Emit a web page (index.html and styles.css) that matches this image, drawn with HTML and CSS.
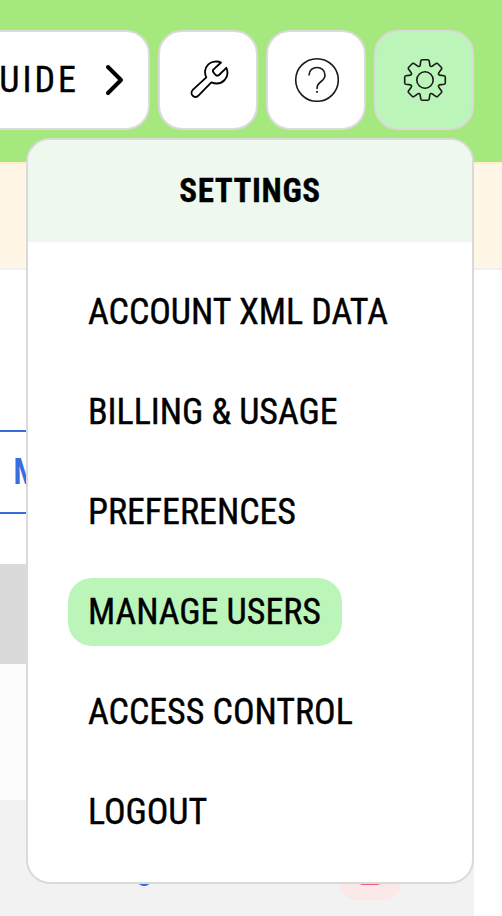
FILE: index.html
```html
<!DOCTYPE html>
<html lang="en">
<head>
<meta charset="utf-8">
<title>Settings</title>
<link rel="stylesheet" href="styles.css">
</head>
<body>
<header class="topbar">
  <button class="tool guide"><span class="guide-label">GUIDE</span>
    <svg class="chevron" width="20" height="32" viewBox="0 0 20 32"><path d="M3 3 L16 16 L3 29"/></svg>
  </button>
  <button class="tool" aria-label="Tools">
    <svg class="icon wrench" width="44" height="44" viewBox="108 114 132 132"><path d="M213 127.500 L190 149 Q187 153 191 158 L197 165 Q202 169 207 165 L229 143.500 C234 155 233 170 224 180 C214 190 198 193 184 187 L146 226 C140 233 132 232 128 227 C123 222 124 214 129 209 L169 172 C162 159 165 143 175 133 C185 124 202 122 213 127.500 Z"/></svg>
  </button>
  <button class="tool" aria-label="Help">
    <svg class="icon thin" width="46" height="46" viewBox="0 0 46 46"><circle cx="24" cy="23" r="21.3"/><path d="M16 18 C16 8 32 8 32 18 C32 25.5 24 23.5 24 31.500"/><path d="M23.1 34h1.8v1.8h-1.8z" class="dot"/></svg>
  </button>
  <button class="tool selected" aria-label="Settings">
    <svg class="icon thin" width="46" height="46" viewBox="-24 -23 46 46"><circle r="8.2"/><path d="M-4.9 -14.3 L-4.2 -19.2 Q-4 -20.3 -2.8 -20.3 H2.8 Q4 -20.3 4.2 -19.2 L4.9 -14.3 Q5.7 -12.9 7.2 -13.8 L11.2 -16.7 Q12 -17 12.8 -16.3 L16.3 -12.8 Q17 -12 16.7 -11.2 L13.8 -7.2 Q12.9 -5.7 14.3 -4.9 L19.2 -4.2 Q20.3 -4 20.3 -2.8 V2.8 Q20.3 4 19.2 4.2 L14.3 4.9 Q12.9 5.7 13.8 7.2 L16.7 11.2 Q17 12 16.3 12.8 L12.8 16.3 Q12 17 11.2 16.7 L7.2 13.8 Q5.7 12.9 4.9 14.3 L4.2 19.2 Q4 20.3 2.8 20.3 H-2.8 Q-4 20.3 -4.2 19.2 L-4.9 14.3 Q-5.7 12.9 -7.2 13.8 L-11.2 16.7 Q-12 17 -12.8 16.3 L-16.3 12.8 Q-17 12 -16.7 11.2 L-13.8 7.2 Q-12.9 5.7 -14.3 4.9 L-19.2 4.2 Q-20.3 4 -20.3 2.8 V-2.8 Q-20.3 -4 -19.2 -4.2 L-14.3 -4.9 Q-12.9 -5.7 -13.8 -7.2 L-16.7 -11.2 Q-17 -12 -16.3 -12.8 L-12.8 -16.3 Q-12 -17 -11.2 -16.7 L-7.2 -13.8 Q-5.7 -12.9 -4.9 -14.3 Z"/></svg>
  </button>
</header>
<div class="banner"></div>
<main class="content">
  <div class="action">M</div>
  <div class="table">
    <div class="thead"></div>
    <div class="row"></div>
    <div class="row alt"><span class="link">g</span><span class="delete"><svg width="26" height="26" viewBox="0 0 26 26"><path d="M1 1V18Q2 23.800 6 23.800H20Q24 23.800 25 18V1"/></svg></span></div>
  </div>
</main>
<nav class="menu">
  <h2 class="menu-title">SETTINGS</h2>
  <ul class="items">
    <li><a class="item">ACCOUNT XML DATA</a></li>
    <li><a class="item">BILLING &amp; USAGE</a></li>
    <li><a class="item">PREFERENCES</a></li>
    <li><a class="item active">MANAGE USERS</a></li>
    <li><a class="item">ACCESS CONTROL</a></li>
    <li><a class="item">LOGOUT</a></li>
  </ul>
</nav>
</body>
</html>
```
FILE: styles.css
```css
* { box-sizing: border-box; }
body {
  margin: 0;
  height: 916px;
  overflow: hidden;
  position: relative;
  background: #fff;
  color: #000;
  font-family: "Roboto Condensed", Roboto, sans-serif;
  font-stretch: 75%;
}
.topbar {
  height: 162px;
  padding: 30px 28px 0 0;
  display: flex;
  justify-content: flex-end;
  gap: 8px;
  background: #a5e97e;
}
.tool {
  flex: none;
  width: 100px;
  height: 100px;
  padding: 0;
  display: flex;
  align-items: center;
  justify-content: center;
  border: 2px solid #dadada;
  border-radius: 24px;
  background: #fff;
  color: #000;
  font: inherit;
}
.tool.selected { background: #bbf5ba; }
.tool.guide {
  width: 220px;
  justify-content: flex-end;
  gap: 25.5px;
  padding-right: 23.5px;
}
.guide-label {
  font-size: 36px;
  letter-spacing: 3px;
  line-height: 44px;
  -webkit-text-stroke: 0.4px #000;
}
.chevron { fill: none; stroke: #000; stroke-width: 4; stroke-linecap: round; stroke-linejoin: round; }
.icon { fill: none; stroke: #000; stroke-linejoin: round; stroke-linecap: round; }
.wrench { stroke-width: 5.5; }
.thin { stroke: #1a1a1a; stroke-width: 1.6; }
.dot { fill: #1a1a1a; stroke: none; }
.banner {
  height: 108px;
  background: #fff6e5;
  border-top: 2px solid #ffedcc;
  border-bottom: 2px solid #f0f0f0;
}
.content { padding-top: 160px; }
.action {
  width: 200px;
  height: 84px;
  padding-left: 13px;
  border: solid #376edb;
  border-width: 2px 0;
  color: #376edb;
  font-size: 36px;
  font-weight: 500;
  line-height: 80px;
}
.table { width: 474px; margin-top: 50px; }
.thead { height: 100px; background: #dadada; }
.row { height: 136px; background: #fcfcfc; }
.row.alt {
  padding: 40px 72px 0 136px;
  display: flex;
  justify-content: space-between;
  background: #f2f2f2;
}
.link { color: #376edb; font-size: 34px; line-height: 54px; }
.delete {
  width: 64px;
  height: 60px;
  padding-top: 20px;
  border-radius: 20px;
  background: #fbe8e8;
}
.delete svg { display: block; margin: 0 auto; fill: none; stroke: #f0305f; stroke-width: 2; }
.menu {
  position: absolute;
  left: 26px;
  top: 138px;
  width: 448px;
  height: 746px;
  overflow: hidden;
  border: 2px solid #dadada;
  border-radius: 24px;
  background: #fff;
}
.menu-title {
  margin: 0;
  height: 102px;
  background: #eef8ee;
  font-size: 33px;
  font-weight: 700;
  line-height: 101px;
  letter-spacing: 0.6px;
  text-align: center;
  -webkit-text-stroke: 0.3px #000;
}
.items {
  margin: 0;
  padding: 36px 40px 0;
  display: flex;
  flex-direction: column;
  gap: 32px;
  list-style: none;
}
.items li { display: flex; }
.item {
  height: 68px;
  padding: 1px 21px 0 20px;
  border-radius: 24px;
  font-size: 36px;
  line-height: 67px;
  letter-spacing: -0.04px;
  white-space: nowrap;
  -webkit-text-stroke: 0.4px #000;
}
.active { background: #bbf5ba; }
```
